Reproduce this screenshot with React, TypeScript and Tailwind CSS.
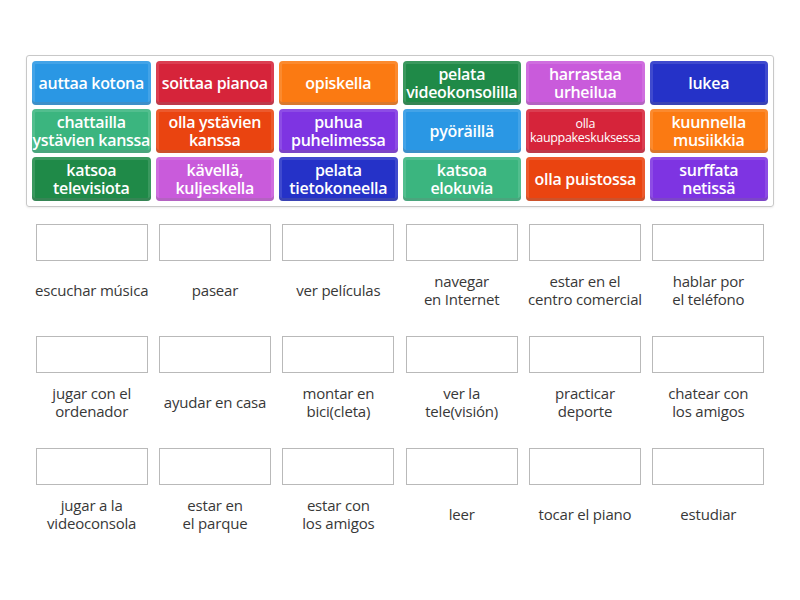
import React from 'react';

interface Tile {
  lines: string[];
  color: string;
  small?: boolean;
}

const tiles: Tile[] = [
  { lines: ['auttaa kotona'], color: 'bg-[#2a97e4]' },
  { lines: ['soittaa pianoa'], color: 'bg-[#d6243a]' },
  { lines: ['opiskella'], color: 'bg-[#fb7a12]' },
  { lines: ['pelata', 'videokonsolilla'], color: 'bg-[#1f8a48]' },
  { lines: ['harrastaa', 'urheilua'], color: 'bg-[#c95bdb]' },
  { lines: ['lukea'], color: 'bg-[#2532c8]' },
  { lines: ['chattailla', 'ystävien kanssa'], color: 'bg-[#3bb57f]' },
  { lines: ['olla ystävien', 'kanssa'], color: 'bg-[#ea4410]' },
  { lines: ['puhua', 'puhelimessa'], color: 'bg-[#7e34e2]' },
  { lines: ['pyöräillä'], color: 'bg-[#2a97e4]' },
  { lines: ['olla', 'kauppakeskuksessa'], color: 'bg-[#d6243a]', small: true },
  { lines: ['kuunnella', 'musiikkia'], color: 'bg-[#fb7a12]' },
  { lines: ['katsoa', 'televisiota'], color: 'bg-[#1f8a48]' },
  { lines: ['kävellä,', 'kuljeskella'], color: 'bg-[#c95bdb]' },
  { lines: ['pelata', 'tietokoneella'], color: 'bg-[#2532c8]' },
  { lines: ['katsoa', 'elokuvia'], color: 'bg-[#3bb57f]' },
  { lines: ['olla puistossa'], color: 'bg-[#ea4410]' },
  { lines: ['surffata', 'netissä'], color: 'bg-[#7e34e2]' },
];

const targets: string[][] = [
  ['escuchar música'],
  ['pasear'],
  ['ver películas'],
  ['navegar', 'en Internet'],
  ['estar en el', 'centro comercial'],
  ['hablar por', 'el teléfono'],
  ['jugar con el', 'ordenador'],
  ['ayudar en casa'],
  ['montar en', 'bici(cleta)'],
  ['ver la', 'tele(visión)'],
  ['practicar', 'deporte'],
  ['chatear con', 'los amigos'],
  ['jugar a la', 'videoconsola'],
  ['estar en', 'el parque'],
  ['estar con', 'los amigos'],
  ['leer'],
  ['tocar el piano'],
  ['estudiar'],
];

export default function App() {
  return (
    <div className="w-[800px] h-[600px] bg-white font-['Open_Sans',sans-serif]">
      <div className="pt-[55px] px-[26px]">
        {/* Word bank */}
        <div className="border border-[#c8c8c8] rounded-[3px] p-[5px] grid grid-cols-6 gap-x-[5px] gap-y-[4px] shadow-[0_1px_2px_rgba(0,0,0,0.08)]">
          {tiles.map((t, i) => (
            <div
              key={i}
              className={`${t.color} h-[44px] rounded-[4px] flex flex-col items-center justify-center text-center text-white whitespace-nowrap shadow-[inset_0_0_0_3px_rgba(255,255,255,0.12),inset_0_-3px_0_rgba(0,0,0,0.15)]`}
            >
              {t.lines.map((l, j) => (
                <div
                  key={j}
                  className={
                    t.small
                      ? 'text-[12.5px] leading-[14px] tracking-[-0.3px]'
                      : 'text-[16px] leading-[18px] font-semibold tracking-[-0.3px]'
                  }
                >
                  {l}
                </div>
              ))}
            </div>
          ))}
        </div>

        {/* Targets */}
        <div className="mt-[17px] px-[4px] grid grid-cols-6">
          {targets.map((lines, i) => (
            <div key={i} className="h-[112px] flex flex-col items-center">
              <div className="w-[112px] h-[37px] border border-[#b9b9b9] bg-white" />
              <div className="h-[58px] flex flex-col items-center justify-center text-center text-[15px] leading-[18px] text-[#383838] tracking-[-0.2px]">
                {lines.map((l, j) => (
                  <div key={j}>{l}</div>
                ))}
              </div>
            </div>
          ))}
        </div>
      </div>
    </div>
  );
}
